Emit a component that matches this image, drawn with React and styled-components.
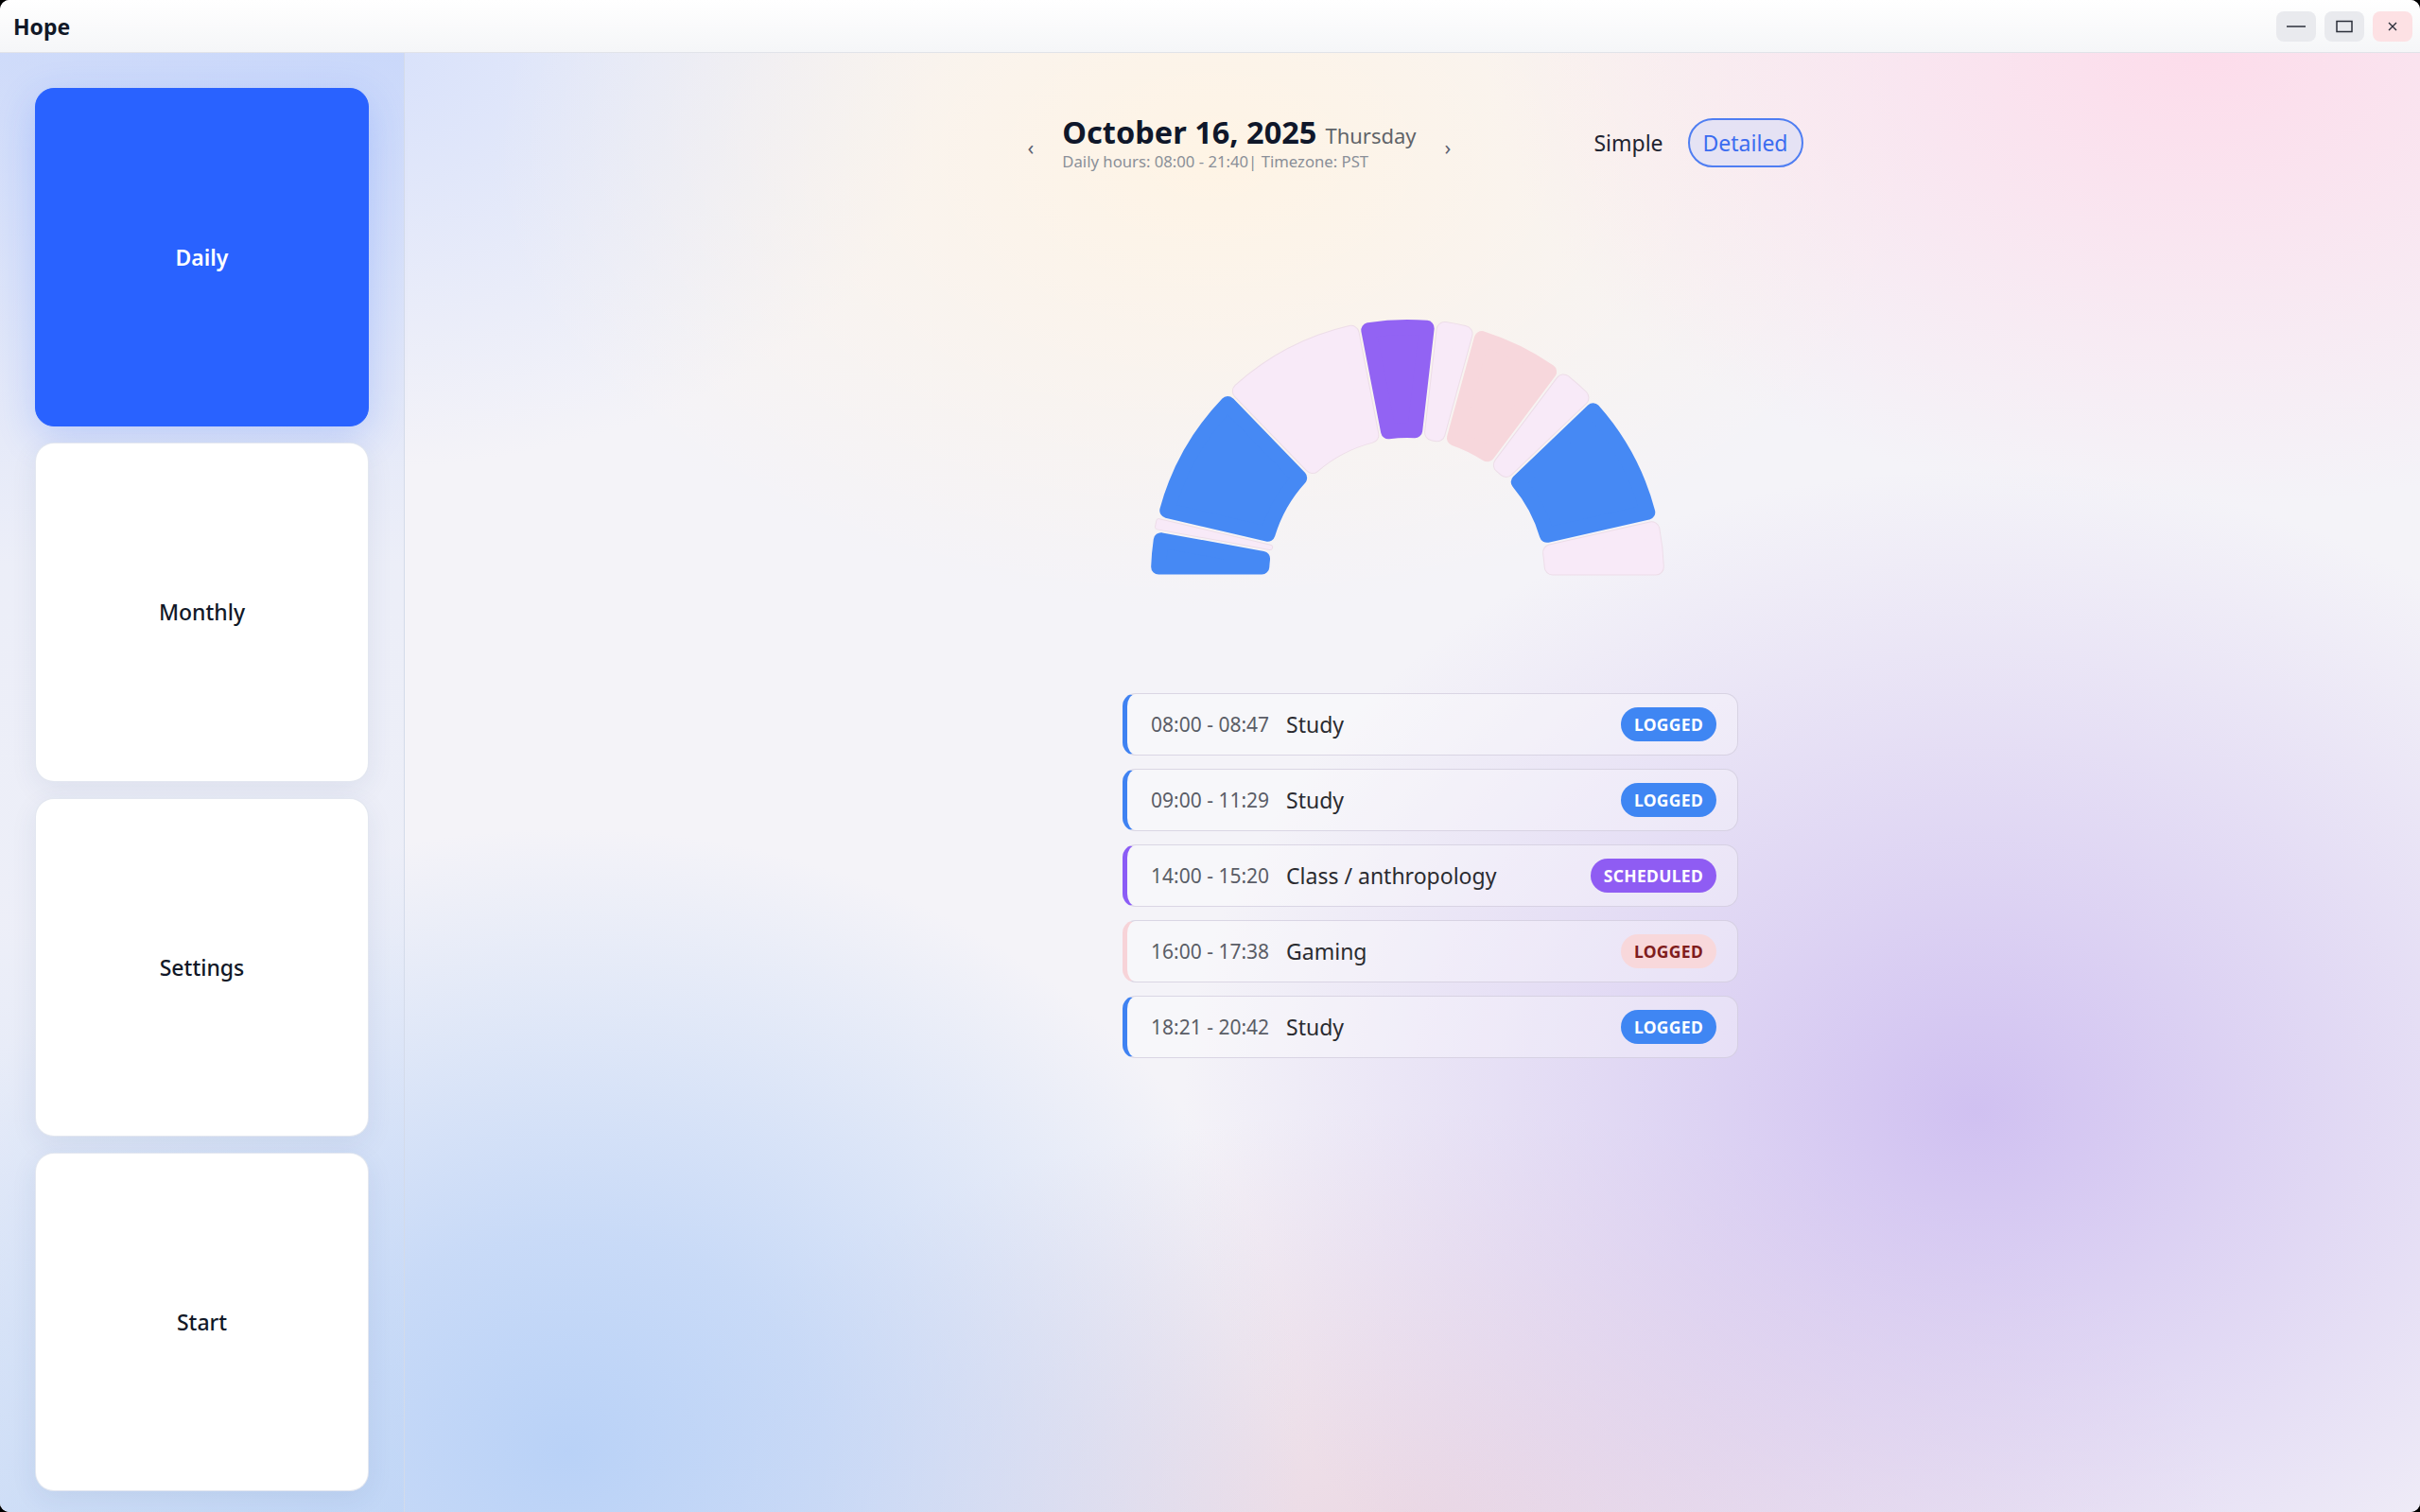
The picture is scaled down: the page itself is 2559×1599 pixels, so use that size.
import React from 'react'
import styled, { createGlobalStyle } from 'styled-components'

const GlobalStyle = createGlobalStyle`
  * { box-sizing: border-box; }
  html, body, #root { height: 100%; }
  body {
    margin: 0;
    background: #000;
    font-family: "Noto Sans", "Open Sans", "Liberation Sans", sans-serif;
    color: #111827;
  }
`

const Window = styled.div`
  height: 100vh;
  display: flex;
  flex-direction: column;
  border-radius: 10px;
  overflow: hidden;
  background: #f4f3f8;
`

const TitleBar = styled.header`
  height: 56px;
  flex-shrink: 0;
  display: flex;
  align-items: center;
  justify-content: space-between;
  padding: 0 8px 0 14px;
  background: linear-gradient(180deg, #ffffff 0%, #f5f6f8 100%);
  border-bottom: 1px solid #e1e3e9;
`

const AppTitle = styled.h1`
  margin: 0;
  font-size: 23px;
  font-weight: 700;
  color: #111827;
`

const WindowControls = styled.div`
  display: flex;
  gap: 9px;
`

const ControlButton = styled.button`
  width: 42px;
  height: 32px;
  border: none;
  border-radius: 8px;
  display: flex;
  align-items: center;
  justify-content: center;
  padding: 0;
  background: ${p => (p.$danger ? '#fde1e4' : '#e9eaee')};
  color: #2b2f3a;
`

const Body = styled.div`
  flex: 1;
  display: flex;
  min-height: 0;
  background:
    radial-gradient(780px 660px at 600px 1480px, rgba(182, 208, 247, 0.95) 0%, rgba(186, 210, 247, 0.75) 35%, rgba(190, 212, 247, 0) 100%),
    radial-gradient(840px 680px at 2090px 1120px, rgba(202, 184, 240, 0.85) 0%, rgba(206, 190, 240, 0.6) 35%, rgba(206, 190, 240, 0) 100%),
    radial-gradient(760px 480px at 2330px 0px, rgba(253, 219, 234, 0.95), rgba(253, 219, 234, 0) 100%),
    radial-gradient(760px 480px at 1280px 110px, rgba(255, 244, 228, 0.95), rgba(255, 244, 228, 0) 100%),
    radial-gradient(640px 440px at 380px 0px, rgba(214, 224, 251, 0.95), rgba(214, 224, 251, 0) 100%),
    radial-gradient(860px 440px at 1500px 1560px, rgba(234, 212, 224, 0.85), rgba(234, 212, 224, 0) 100%),
    #f4f3f8;
`

const Sidebar = styled.nav`
  width: 428px;
  flex-shrink: 0;
  display: flex;
  flex-direction: column;
  gap: 17px;
  padding: 37px 37px 22px;
  border-right: 1px solid #d4dbea;
  background: linear-gradient(
    180deg,
    rgba(196, 212, 250, 0.7) 0%,
    rgba(226, 232, 248, 0.45) 35%,
    rgba(226, 232, 248, 0.4) 60%,
    rgba(192, 214, 246, 0.6) 100%
  );
`

const NavCard = styled.button`
  flex: 1;
  border-radius: 20px;
  display: flex;
  align-items: center;
  justify-content: center;
  font-family: inherit;
  font-size: 23px;
  font-weight: ${p => (p.$active ? 600 : 500)};
  color: ${p => (p.$active ? '#ffffff' : '#111827')};
  background: ${p => (p.$active ? '#2962ff' : '#ffffff')};
  border: 1px solid ${p => (p.$active ? '#2962ff' : 'rgba(224, 228, 238, 0.9)')};
  box-shadow: ${p =>
    p.$active
      ? '0 12px 40px rgba(41, 98, 255, 0.22)'
      : '0 8px 28px rgba(40, 60, 110, 0.08)'};
`

const Main = styled.main`
  flex: 1;
  display: flex;
  flex-direction: column;
  align-items: center;
  padding-top: 64px;
`

const Header = styled.div`
  width: 820px;
  margin-left: 6px;
  display: flex;
  align-items: center;
  justify-content: space-between;
`

const DateNav = styled.div`
  display: flex;
  align-items: center;
  gap: 30px;
`

const Chevron = styled.span`
  font-size: 22px;
  line-height: 1;
  color: #5b6170;
  padding-top: 8px;
`

const DateBlock = styled.div`
  display: flex;
  flex-direction: column;
`

const DateLine = styled.div`
  display: flex;
  align-items: baseline;
  gap: 9px;
`

const DateTitle = styled.h2`
  margin: 0;
  font-size: 32.5px;
  font-weight: 700;
  line-height: 1.22;
  color: #0f172a;
`

const Weekday = styled.span`
  font-size: 22px;
  color: #5f6368;
`

const DateMeta = styled.div`
  font-size: 16.7px;
  color: #8a8f98;
  margin-top: -1px;
`

const ViewToggle = styled.div`
  display: flex;
  align-items: center;
  gap: 10px;
`

const ToggleOption = styled.button`
  height: 52px;
  padding: 0 14px;
  border-radius: 999px;
  font-family: inherit;
  font-size: 23px;
  color: ${p => (p.$active ? '#3b6cf0' : '#1f2430')};
  background: ${p => (p.$active ? 'rgba(226, 224, 245, 0.85)' : 'transparent')};
  border: 2px solid ${p => (p.$active ? '#4f7ef2' : 'transparent')};
`

const ChartWrap = styled.div`
  margin-top: 140px;
  width: 560px;
  height: 300px;
`

const EntryList = styled.ul`
  list-style: none;
  margin: 111px 0 0 38px;
  padding: 0;
  width: 651px;
  display: flex;
  flex-direction: column;
  gap: 14px;
`

const EntryRow = styled.li`
  height: 66px;
  display: flex;
  align-items: center;
  padding: 0 22px 0 25px;
  border-radius: 14px;
  border: 1px solid rgba(205, 200, 218, 0.7);
  border-left: 5px solid ${p => p.$accent};
  background: rgba(255, 255, 255, 0.32);
`

const EntryTime = styled.span`
  font-size: 21px;
  color: #5a5d66;
  margin-right: 18px;
`

const EntryTitle = styled.span`
  flex: 1;
  font-size: 23px;
  color: #2a2b30;
`

const Badge = styled.span`
  height: 36px;
  display: inline-flex;
  align-items: center;
  padding: 0 14px;
  border-radius: 999px;
  font-size: 17.5px;
  font-weight: 700;
  letter-spacing: 0.3px;
  color: ${p => p.$fg};
  background: ${p => p.$bg};
`

const BLUE = '#4689f4'
const PURPLE = '#9263f3'
const PINK = '#f7d7dc'
const EMPTY = '#f8eaf8'

const START = 8 * 60
const END = 21 * 60 + 40

const toMin = t => {
  const [h, m] = t.split(':').map(Number)
  return h * 60 + m
}

const entries = [
  { from: '08:00', to: '08:47', title: 'Study', status: 'LOGGED', kind: 'study' },
  { from: '09:00', to: '11:29', title: 'Study', status: 'LOGGED', kind: 'study' },
  { from: '14:00', to: '15:20', title: 'Class / anthropology', status: 'SCHEDULED', kind: 'class' },
  { from: '16:00', to: '17:38', title: 'Gaming', status: 'LOGGED', kind: 'gaming' },
  { from: '18:21', to: '20:42', title: 'Study', status: 'LOGGED', kind: 'study' },
]

const kinds = {
  study: { accent: '#3f82f2', arc: BLUE, badgeBg: '#3f86f3', badgeFg: '#ffffff' },
  class: { accent: '#8b5cf6', arc: PURPLE, badgeBg: '#8f5cf3', badgeFg: '#ffffff' },
  gaming: { accent: '#f7d3d8', arc: PINK, badgeBg: '#f8d8db', badgeFg: '#7f1d1d' },
}

// build the timeline: logged blocks plus the empty stretches between them
const segments = []
let cursor = START
entries.forEach(e => {
  const a = toMin(e.from)
  const b = toMin(e.to)
  if (a > cursor) segments.push({ a: cursor, b: a, color: EMPTY, empty: true })
  segments.push({ a, b, color: kinds[e.kind].arc })
  cursor = b
})
if (cursor < END) segments.push({ a: cursor, b: END, color: EMPTY, empty: true })

const CX = 274
const CY = 287
const R_OUT = 271
const R_IN = 146
const GAP = 3

const angleOf = m => Math.PI * (1 - (m - START) / (END - START))
const pt = (r, a) => `${(CX + r * Math.cos(a)).toFixed(2)} ${(CY - r * Math.sin(a)).toFixed(2)}`

function sectorPath(a1, a2, cr) {
  const d = GAP / 2 + cr
  const ro = R_OUT - cr
  const ri = R_IN + cr
  const oS = a1 - Math.asin(d / ro)
  const oE = a2 + Math.asin(d / ro)
  let iS = a1 - Math.asin(d / ri)
  let iE = a2 + Math.asin(d / ri)
  if (iS < iE) {
    const mid = (a1 + a2) / 2
    iS = mid
    iE = mid
  }
  const large = oS - oE > Math.PI ? 1 : 0
  return `M ${pt(ro, oS)} A ${ro} ${ro} 0 ${large} 1 ${pt(ro, oE)} L ${pt(ri, iE)} A ${ri} ${ri} 0 0 0 ${pt(ri, iS)} Z`
}

const DayArc = () => (
  <svg width="560" height="300" viewBox="0 0 560 300">
    {segments.map((s, i) => {
      const a1 = angleOf(s.a)
      const a2 = angleOf(s.b)
      const room = (a1 - a2) * R_IN - GAP
      const cr = Math.max(1.5, Math.min(8, room / 2))
      const d = sectorPath(a1, a2, cr)
      return (
        <g key={i}>
          {s.empty && (
            <path d={d} fill="none" stroke="#eddde8" strokeWidth={cr * 2 + 2} strokeLinejoin="round" />
          )}
          <path d={d} fill={s.color} stroke={s.color} strokeWidth={cr * 2} strokeLinejoin="round" />
        </g>
      )
    })}
  </svg>
)

const MinimizeIcon = () => (
  <svg width="20" height="4" viewBox="0 0 20 4">
    <line x1="0" y1="2" x2="20" y2="2" stroke="currentColor" strokeWidth="1.5" />
  </svg>
)

const MaximizeIcon = () => (
  <svg width="18" height="14" viewBox="0 0 18 14">
    <rect x="1" y="1.5" width="16" height="11" fill="none" stroke="currentColor" strokeWidth="1.5" />
  </svg>
)

const CloseIcon = () => (
  <svg width="10" height="10" viewBox="0 0 10 10">
    <path d="M1 1 L9 9 M9 1 L1 9" stroke="currentColor" strokeWidth="1.4" />
  </svg>
)

const navItems = ['Daily', 'Monthly', 'Settings', 'Start']

const App = () => (
  <>
    <GlobalStyle />
    <Window>
      <TitleBar>
        <AppTitle>Hope</AppTitle>
        <WindowControls>
          <ControlButton><MinimizeIcon /></ControlButton>
          <ControlButton><MaximizeIcon /></ControlButton>
          <ControlButton $danger><CloseIcon /></ControlButton>
        </WindowControls>
      </TitleBar>
      <Body>
        <Sidebar>
          {navItems.map(item => (
            <NavCard key={item} $active={item === 'Daily'}>{item}</NavCard>
          ))}
        </Sidebar>
        <Main>
          <Header>
            <DateNav>
              <Chevron>‹</Chevron>
              <DateBlock>
                <DateLine>
                  <DateTitle>October 16, 2025</DateTitle>
                  <Weekday>Thursday</Weekday>
                </DateLine>
                <DateMeta>Daily hours: 08:00 - 21:40| Timezone: PST</DateMeta>
              </DateBlock>
              <Chevron>›</Chevron>
            </DateNav>
            <ViewToggle>
              <ToggleOption>Simple</ToggleOption>
              <ToggleOption $active>Detailed</ToggleOption>
            </ViewToggle>
          </Header>
          <ChartWrap>
            <DayArc />
          </ChartWrap>
          <EntryList>
            {entries.map(e => {
              const k = kinds[e.kind]
              return (
                <EntryRow key={e.from} $accent={k.accent}>
                  <EntryTime>{e.from} - {e.to}</EntryTime>
                  <EntryTitle>{e.title}</EntryTitle>
                  <Badge $bg={k.badgeBg} $fg={k.badgeFg}>{e.status}</Badge>
                </EntryRow>
              )
            })}
          </EntryList>
        </Main>
      </Body>
    </Window>
  </>
)

export default App
